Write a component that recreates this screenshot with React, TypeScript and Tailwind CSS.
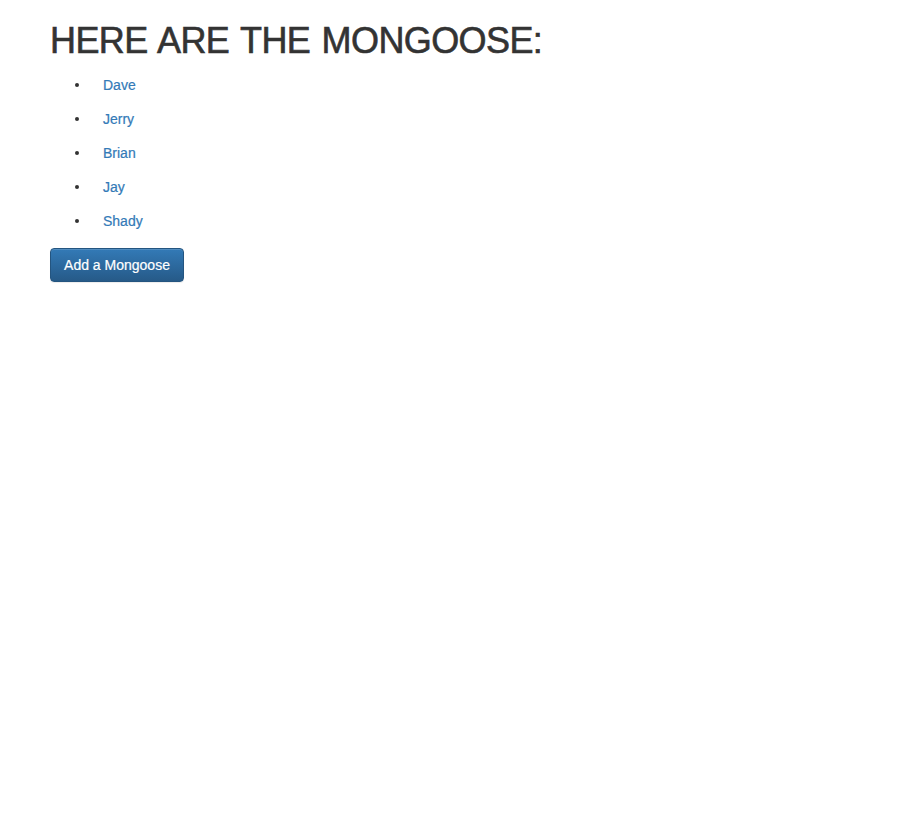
export default function App() {
  const names = ["Dave", "Jerry", "Brian", "Jay", "Shady"];
  return (
    <div className="min-h-[836px] bg-white pl-[50px]" style={{ fontFamily: '"Liberation Sans", Arial, sans-serif' }}>
      <h1 className="pt-[21px] text-[36px] leading-[40px] font-normal tracking-[-0.6px] [word-spacing:2px] text-[#333333] [-webkit-text-stroke:0.6px_#333333]">HERE ARE THE MONGOOSE:</h1>
      <ul className="mt-[7px] flex flex-col">
        {names.map((n) => (
          <li key={n} className="flex h-[34px] items-center text-[14px] leading-[20px]">
            <span className="ml-[25px] h-[4px] w-[4px] rounded-full bg-[#333333]" />
            <a href="#" className="ml-[24px] text-[#337ab7] [-webkit-text-stroke:0.2px_#337ab7]">{n}</a>
          </li>
        ))}
      </ul>
      <button className="mt-[10px] h-[34px] w-[134px] rounded-[4px] border border-[#245580] bg-gradient-to-b from-[#337ab7] to-[#265a88] text-[14px] text-white [-webkit-text-stroke:0.2px_#ffffff] shadow-[inset_0_1px_0_rgba(255,255,255,0.15),0_1px_1px_rgba(0,0,0,0.075)]">
        Add a Mongoose
      </button>
    </div>
  );
}
